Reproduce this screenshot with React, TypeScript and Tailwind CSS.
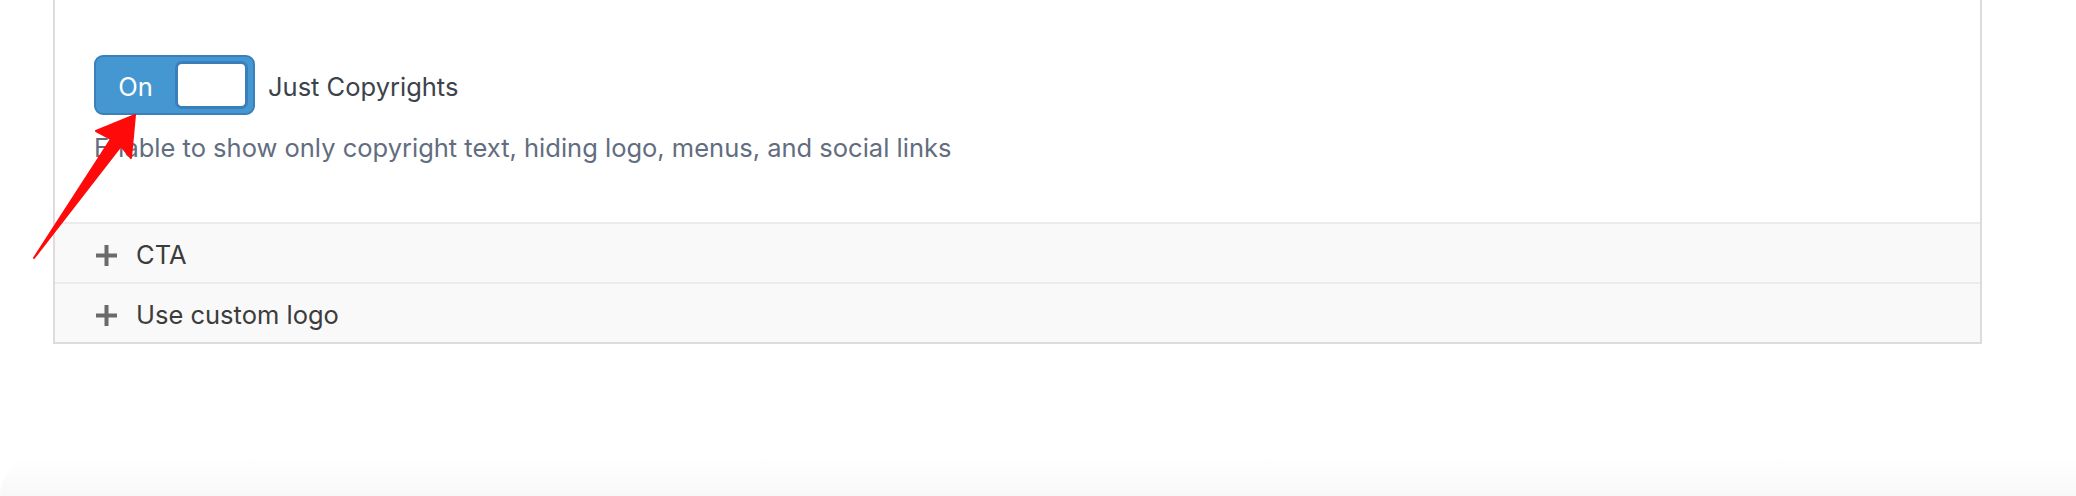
import React from "react";

function Plus() {
  return (
    <svg width="21" height="21" viewBox="0 0 21 21" className="shrink-0">
      <rect x="8.5" y="0" width="4" height="21" fill="#6b6b6b" />
      <rect x="0" y="8.5" width="21" height="4" fill="#6b6b6b" />
    </svg>
  );
}

function Row({ label }: { label: string }) {
  return (
    <div className="h-[60px] border-t-2 border-[#ebebeb] bg-[#f9f9f9] flex items-center pl-[41px] pt-[4px] gap-[19px]">
      <Plus />
      <span className="text-[25.5px] text-[#3c3c3c] leading-none">{label}</span>
    </div>
  );
}

export default function App() {
  return (
    <div
      className="relative h-[496px] w-[2076px] bg-white flex flex-col overflow-hidden"
      style={{ fontFamily: "Inter, 'Noto Sans', sans-serif" }}
    >
      <div className="ml-[53px] w-[1929px] border-x-2 border-b-2 border-[#dcdcdc] flex flex-col">
        <div className="h-[222px] pl-[39px] pt-[55px] flex flex-col">
          <div className="flex items-center gap-[13px]">
            <div className="w-[161px] h-[60px] rounded-[9px] bg-[#4497d1] border-2 border-[#3a80bb] flex items-center justify-between pr-[5px]">
              <span className="w-[80px] pt-[3px] text-center text-white text-[25.5px] leading-none">On</span>
              <div className="w-[74px] h-[48px] rounded-[7px] bg-white border-[3px] border-[#3a7fba]" />
            </div>
            <span className="pt-[3px] text-[25.5px] text-[#3c434a] leading-none">Just Copyrights</span>
          </div>
          <p className="mt-[16px] text-[25.5px] leading-[34px] text-[#626d7f]">
            Enable to show only copyright text, hiding logo, menus, and social links
          </p>
        </div>
        <Row label="CTA" />
        <Row label="Use custom logo" />
      </div>
      <div className="mt-auto h-[40px] rounded-tl-[60px] bg-gradient-to-b from-white to-[#f8f8f8]" />
      <svg
        className="absolute left-0 top-0 pointer-events-none"
        width="200"
        height="300"
        viewBox="0 0 200 300"
      >
        <polygon
          points="135,115 131,158 121,146 34,258 111,139 96,131"
          fill="#ff0a0a"
          stroke="#ff0a0a"
          strokeWidth="2"
          strokeLinejoin="round"
        />
      </svg>
    </div>
  );
}
